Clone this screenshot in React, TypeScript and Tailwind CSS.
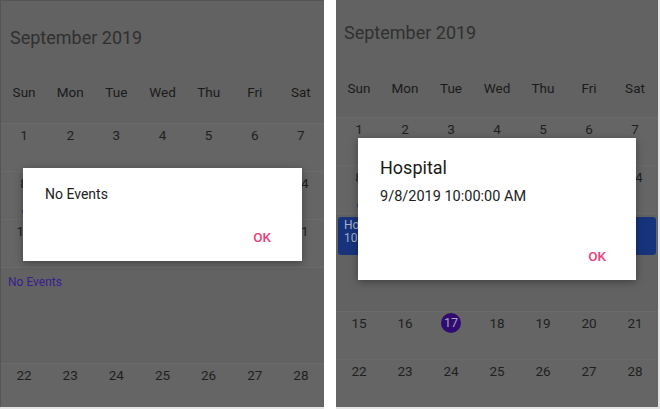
import React from "react";

const weeks = [
  [1, 2, 3, 4, 5, 6, 7],
  [8, 9, 10, 11, 12, 13, 14],
  [15, 16, 17, 18, 19, 20, 21],
  [22, 23, 24, 25, 26, 27, 28],
];
const days = ["Sun", "Mon", "Tue", "Wed", "Thu", "Fri", "Sat"];

function WeekRow({ week }: { week: number[] }) {
  return (
    <div className="grid h-[48px] shrink-0 grid-cols-7 border-t border-[#6a6a6a] bg-[#656565]">
      {week.map((d) => (
        <div key={d} className="flex flex-col items-center pt-[1px]">
          {d === 17 ? (
            <span className="flex size-5 items-center justify-center rounded-full bg-[#2f0b72] text-[12.5px] leading-5 text-[#a9a2b8]">
              {d}
            </span>
          ) : (
            <span className="text-[13.5px] leading-5 text-[#1f1f1f]">{d}</span>
          )}
          {d === 8 && <span className="mt-[16px] size-[5px] rounded-full bg-[#1f3f95]" />}
        </div>
      ))}
    </div>
  );
}

interface PanelProps {
  side: "left" | "right";
}

function Panel({ side }: PanelProps) {
  const left = side === "left";
  const agendaAfter = left ? 2 : 1;

  return (
    <div
      className={
        left
          ? "relative flex h-[407px] w-[324px] flex-col overflow-hidden border-t border-l border-[#555] bg-[#626262]"
          : "relative flex h-[407px] w-[322px] flex-col overflow-hidden bg-[#626262]"
      }
    >
      <div
        className={
          left
            ? "px-[9px] pt-[25px] text-[18px] leading-6 text-[#303030]"
            : "px-[8px] pt-[21px] text-[18px] leading-6 text-[#303030]"
        }
      >
        September 2019
      </div>
      <div
        className={
          left
            ? "mt-[32px] mb-[21px] grid grid-cols-7 text-[13.5px] leading-5 text-[#1a1a1a]"
            : "mt-[33px] mb-[19px] grid grid-cols-7 text-[13.5px] leading-5 text-[#1a1a1a]"
        }
      >
        {days.map((d) => (
          <div key={d} className="text-center">
            {d}
          </div>
        ))}
      </div>

      {weeks.map((w, i) => (
        <React.Fragment key={i}>
          <WeekRow week={w} />
          {i === agendaAfter &&
            (left ? (
              <div className="h-[96px] shrink-0 border-t border-[#6a6a6a] pt-[6px] pl-[7px] text-[12px] leading-4 text-[#3b1d8f]">
                No Events
              </div>
            ) : (
              <div className="h-[98px] shrink-0 border-t border-[#6a6a6a] px-[2px] pt-[3px]">
                <div className="h-[38px] overflow-hidden rounded-[3px] bg-[#17337c] pt-[2px] pl-[6px] text-[12px] leading-[13px] text-[#a6aec6]">
                  <div>Hospital</div>
                  <div>10:00 AM - 11:00 AM</div>
                </div>
              </div>
            ))}
        </React.Fragment>
      ))}

      {left ? (
        <div className="absolute top-[167px] left-[22px] flex h-[93px] w-[279px] flex-col justify-between bg-white shadow-[0_2px_8px_rgba(0,0,0,0.35)]">
          <div className="px-[22px] pt-[16px] text-[14px] leading-5 text-[#212121]">No Events</div>
          <div className="flex justify-end pr-[31px] pb-[16px]">
            <span className="text-[13.5px] leading-4 font-medium text-[#ec3e77]">OK</span>
          </div>
        </div>
      ) : (
        <div className="absolute top-[138px] left-[22px] flex h-[142px] w-[278px] flex-col justify-between bg-white shadow-[0_2px_8px_rgba(0,0,0,0.35)]">
          <div className="px-[22px] pt-[18px]">
            <div className="text-[18px] leading-6 text-[#1a1a1a]">Hospital</div>
            <div className="mt-[7px] text-[14.5px] leading-5 text-[#212121]">9/8/2019 10:00:00 AM</div>
          </div>
          <div className="flex justify-end pr-[30px] pb-[16px]">
            <span className="text-[13.5px] leading-4 font-medium text-[#ec3e77]">OK</span>
          </div>
        </div>
      )}
    </div>
  );
}

export default function App() {
  return (
    <div
      className="flex h-[409px] w-[660px] bg-white"
      style={{ fontFamily: "Roboto, 'Noto Sans', sans-serif" }}
    >
      <div className="border-b-2 border-[#e4e4e4]">
        <Panel side="left" />
      </div>
      <div className="w-[12px]" />
      <div className="border-r-2 border-b-2 border-[#e4e4e4]">
        <Panel side="right" />
      </div>
    </div>
  );
}
